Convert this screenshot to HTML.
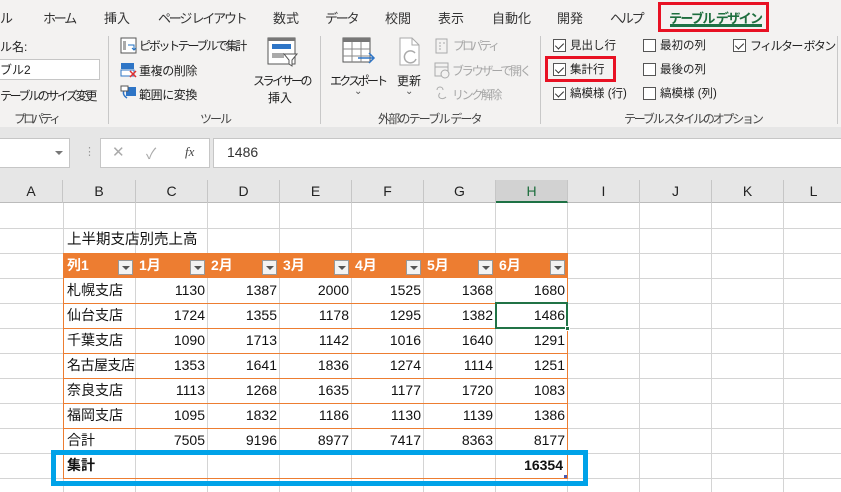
<!DOCTYPE html>
<html><head><meta charset="utf-8"><style>
*{margin:0;padding:0;box-sizing:border-box}
body{width:841px;height:492px;overflow:hidden;background:#fff;font-family:"Liberation Sans","Noto Sans CJK JP",sans-serif;color:#222;position:relative}
.a{position:absolute;white-space:nowrap}
.t{font-size:13px;top:8px;color:#333}
.k{letter-spacing:-2.2px}
.r{font-size:12px;color:#222}
.g{color:#a6a6a6}
.lbl{font-size:12px;top:110px;color:#444}
.sep{position:absolute;top:36px;width:1px;height:88px;background:#c8c8c8}
.cb{position:absolute;width:13px;height:13px;border:1px solid #555;background:#fff}
.cb.on::after{content:"";position:absolute;left:3px;top:1px;width:4px;height:7px;border:solid #333;border-width:0 1.5px 1.5px 0;transform:rotate(45deg)}
.grid{position:absolute;left:0;top:203px;width:841px;height:289px}
.vl{position:absolute;top:0;width:1px;height:289px;background:#d4d4d4}
.hl{position:absolute;left:0;width:841px;height:1px;background:#d4d4d4}
.cell{position:absolute;font-size:14px;height:25px;line-height:25px;color:#111}
.num{text-align:right;width:69px}
.hdr{position:absolute;top:180px;height:23px;line-height:23px;font-size:14px;text-align:center;color:#222;border-right:1px solid #c6c6c6}
.dd{position:absolute;top:260px;width:15px;height:15px;background:#f3f3f3;border:1px solid #999}
.dd::after{content:"";position:absolute;left:3px;top:5px;border:4px solid transparent;border-top:4px solid #555}
</style></head><body>
<div class="a" style="left:0;top:0;width:841px;height:127px;background:#f3f2f1"></div>
<div class="a" style="left:0;top:127px;width:841px;height:11px;background:#e6e6e6"></div>
<div class="a t" style="left:0">ル</div>
<div class="a t k" style="left:43px">ホーム</div>
<div class="a t" style="left:104px">挿入</div>
<div class="a t k" style="left:158px">ページ レイアウト</div>
<div class="a t" style="left:273px">数式</div>
<div class="a t k" style="left:325px">データ</div>
<div class="a t" style="left:385px">校閲</div>
<div class="a t" style="left:438px">表示</div>
<div class="a t" style="left:492px">自動化</div>
<div class="a t" style="left:557px">開発</div>
<div class="a t k" style="left:610px">ヘルプ</div>
<div class="a t" style="left:669px;color:#1e6e3e;font-weight:bold;letter-spacing:-1.6px">テーブル デザイン</div>
<div class="a" style="left:670px;top:24px;width:92px;height:3px;background:#1e7145"></div>
<div class="a" style="left:658px;top:2px;width:111px;height:30px;border:3px solid #e81123"></div>

<div class="a r" style="left:0;top:38px">ル名:</div>
<div class="a" style="left:-2px;top:59px;width:102px;height:21px;background:#fff;border:1px solid #c6c6c6"></div>
<div class="a r" style="left:0;top:61px">ブル2</div>
<div class="a r" style="left:0;top:87px;letter-spacing:-2.4px">テーブルのサイズ変更</div>
<div class="a lbl" style="left:14px;letter-spacing:-3px">プロパティ</div>
<div class="sep" style="left:108px"></div>

<svg class="a" style="left:120px;top:37px" width="18" height="70" viewBox="0 0 18 70">
<rect x="1" y="1" width="15" height="15" fill="#fff" stroke="#555"/><rect x="3" y="4" width="3" height="9" fill="#aaa"/><path d="M8 8h6v5M12 11l2 2 2-2" stroke="#1f6fc0" fill="none"/>
<rect x="1" y="26" width="13" height="6" fill="#2e75c6"/><rect x="1" y="33" width="13" height="6" fill="#fff" stroke="#2e75c6"/><path d="M10 34l6 6M16 34l-6 6" stroke="#e03030" stroke-width="1.5"/>
<rect x="6" y="50" width="10" height="9" fill="#2e75c6"/><path d="M5 52q-4 5 2 9" stroke="#2e75c6" fill="none" stroke-width="1.5"/><rect x="1" y="49" width="7" height="5" fill="#fff" stroke="#555"/>
</svg>
<div class="a r" style="left:139px;top:37px;letter-spacing:-2.3px">ピボットテーブルで集計</div>
<div class="a r" style="left:139px;top:62px;letter-spacing:-0.4px">重複の削除</div>
<div class="a r" style="left:139px;top:86px;letter-spacing:-0.4px">範囲に変換</div>
<svg class="a" style="left:267px;top:37px" width="32" height="30" viewBox="0 0 32 30">
<rect x="1" y="1" width="27" height="26" fill="#fff" stroke="#555"/><rect x="1" y="1" width="27" height="3" fill="#777"/><rect x="5" y="7" width="19" height="5" fill="#2e75c6"/><rect x="5" y="16" width="12" height="5" fill="#aaa"/><path d="M17 17h13l-5 6v6l-3-2v-4z" fill="#fff" stroke="#555"/>
</svg>
<div class="a r" style="left:253px;top:72px;letter-spacing:-2.5px">スライサーの</div>
<div class="a r" style="left:268px;top:89px">挿入</div>
<div class="a lbl" style="left:200px;letter-spacing:-2px">ツール</div>
<div class="sep" style="left:320px"></div>

<svg class="a" style="left:342px;top:37px" width="34" height="30" viewBox="0 0 34 30">
<rect x="1" y="1" width="27" height="24" fill="#fff" stroke="#555"/><rect x="1" y="1" width="27" height="4" fill="#777"/><path d="M10 5v20M19 5v20M1 12h27M1 19h27" stroke="#888"/><path d="M16 21h16M27 16l5 5-5 5" stroke="#2e75c6" fill="none" stroke-width="1.5"/>
</svg>
<div class="a r" style="left:330px;top:72px;letter-spacing:-2.7px">エクスポート</div>
<div class="a r" style="left:354px;top:86px;font-size:10px;color:#555">⌄</div>
<svg class="a" style="left:397px;top:37px" width="26" height="30" viewBox="0 0 26 30">
<path d="M3 1h12l7 7v20H3z" fill="#fff" stroke="#aaa"/><path d="M15 1v7h7" fill="none" stroke="#aaa"/><path d="M18 16a6 6 0 1 0 1 6" fill="none" stroke="#aaa" stroke-width="1.5"/>
</svg>
<div class="a r" style="left:397px;top:72px">更新</div>
<div class="a r" style="left:405px;top:86px;font-size:10px;color:#555">⌄</div>
<svg class="a g" style="left:434px;top:38px" width="16" height="68" viewBox="0 0 16 68">
<rect x="2" y="1" width="11" height="14" fill="none" stroke="#aaa"/><path d="M5 5h2M5 8h2M5 11h2M9 5h2" stroke="#aaa"/>
<rect x="1" y="25" width="13" height="13" fill="none" stroke="#aaa"/><path d="M1 29h13" stroke="#aaa"/><circle cx="11" cy="36" r="4" fill="#f3f2f1" stroke="#aaa"/>
<path d="M3 52c0-4 6-4 6 0M6 55c-4 4 2 8 6 4" fill="none" stroke="#aaa"/>
</svg>
<div class="a r g" style="left:453px;top:37px;letter-spacing:-3px">プロパティ</div>
<div class="a r g" style="left:452px;top:62px;letter-spacing:-2.2px">ブラウザーで開く</div>
<div class="a r g" style="left:452px;top:86px;letter-spacing:-2.4px">リンク解除</div>
<div class="a lbl" style="left:378px;letter-spacing:-1.8px">外部のテーブル データ</div>
<div class="sep" style="left:540px"></div>

<div class="cb on" style="left:553px;top:39px"></div><div class="a r" style="left:570px;top:37px;font-size:11.5px">見出し行</div>
<div class="cb on" style="left:553px;top:63px"></div><div class="a r" style="left:570px;top:61px;font-size:11.5px">集計行</div>
<div class="a" style="left:545px;top:56px;width:71px;height:26px;border:3px solid #e81123"></div>
<div class="cb on" style="left:553px;top:87px"></div><div class="a r" style="left:570px;top:85px;font-size:11.5px">縞模様 (行)</div>
<div class="cb" style="left:643px;top:39px"></div><div class="a r" style="left:660px;top:37px;font-size:11.5px">最初の列</div>
<div class="cb" style="left:643px;top:63px"></div><div class="a r" style="left:660px;top:61px;font-size:11.5px">最後の列</div>
<div class="cb" style="left:643px;top:87px"></div><div class="a r" style="left:660px;top:85px;font-size:11.5px">縞模様 (列)</div>
<div class="cb on" style="left:733px;top:39px"></div><div class="a r" style="left:750px;top:37px;letter-spacing:-1.6px">フィルター ボタン</div>
<div class="a lbl" style="left:624px;letter-spacing:-2.2px">テーブル スタイルのオプション</div>
<div class="sep" style="left:837px"></div>

<div class="a" style="left:0;top:138px;width:841px;height:42px;background:#e6e6e6"></div>
<div class="a" style="left:-2px;top:138px;width:72px;height:30px;background:#fff;border:1px solid #c6c6c6"></div>
<div class="a" style="left:55px;top:151px;border:4px solid transparent;border-top:4px solid #777"></div>
<div class="a" style="left:84px;top:145px;font-size:11px;color:#999">⋮</div>
<div class="a" style="left:100px;top:138px;width:110px;height:30px;background:#fff;border:1px solid #c6c6c6"></div>
<div class="a" style="left:112px;top:143px;font-size:15px;color:#aaa">✕</div>
<div class="a" style="left:146px;top:143px;font-size:15px;color:#aaa">✓</div>
<div class="a" style="left:185px;top:144px;font-size:13px;font-style:italic;font-family:'Liberation Serif',serif;color:#444">fx</div>
<div class="a" style="left:213px;top:138px;width:640px;height:30px;background:#fff;border:1px solid #c6c6c6"></div>
<div class="a" style="left:227px;top:144px;font-size:14px;color:#333">1486</div>

<div class="a" style="left:0;top:180px;width:841px;height:23px;background:#e6e6e6;border-bottom:1px solid #bbb"></div>
<div class="hdr" style="left:0;width:63px">A</div>
<div class="hdr" style="left:63px;width:73px">B</div>
<div class="hdr" style="left:136px;width:72px">C</div>
<div class="hdr" style="left:208px;width:72px">D</div>
<div class="hdr" style="left:280px;width:72px">E</div>
<div class="hdr" style="left:352px;width:72px">F</div>
<div class="hdr" style="left:424px;width:72px">G</div>
<div class="hdr" style="left:496px;width:72px;background:#d2d2d2;color:#1e6e3e;border-bottom:2px solid #1e7145">H</div>
<div class="hdr" style="left:568px;width:72px">I</div>
<div class="hdr" style="left:640px;width:72px">J</div>
<div class="hdr" style="left:712px;width:72px">K</div>
<div class="hdr" style="left:784px;width:60px">L</div>

<div class="grid">
<div class="vl" style="left:63px"></div><div class="vl" style="left:135px"></div><div class="vl" style="left:207px"></div><div class="vl" style="left:279px"></div><div class="vl" style="left:351px"></div><div class="vl" style="left:423px"></div><div class="vl" style="left:495px"></div><div class="vl" style="left:567px"></div><div class="vl" style="left:639px"></div><div class="vl" style="left:711px"></div><div class="vl" style="left:783px"></div>
<div class="hl" style="top:25px"></div><div class="hl" style="top:50px"></div><div class="hl" style="top:75px"></div><div class="hl" style="top:100px"></div><div class="hl" style="top:125px"></div><div class="hl" style="top:150px"></div><div class="hl" style="top:175px"></div><div class="hl" style="top:200px"></div><div class="hl" style="top:225px"></div><div class="hl" style="top:250px"></div><div class="hl" style="top:275px"></div>
</div>
<div class="a" style="left:63px;top:253px;width:505px;height:25px;background:#ed7d31"></div>
<div class="a" style="left:63px;top:278px;width:505px;height:175px;background:#fff;border-left:1px solid #ed7d31;border-right:1px solid #ed7d31"></div>
<div class="a" style="left:63px;top:453px;width:505px;height:26px;border:1px solid #ed7d31"></div>
<div class="a" style="left:135px;top:278px;width:1px;height:175px;background:#d4d4d4"></div>
<div class="a" style="left:207px;top:278px;width:1px;height:175px;background:#d4d4d4"></div>
<div class="a" style="left:279px;top:278px;width:1px;height:175px;background:#d4d4d4"></div>
<div class="a" style="left:351px;top:278px;width:1px;height:175px;background:#d4d4d4"></div>
<div class="a" style="left:423px;top:278px;width:1px;height:175px;background:#d4d4d4"></div>
<div class="a" style="left:495px;top:278px;width:1px;height:175px;background:#d4d4d4"></div>
<div class="a" style="left:64px;top:303px;width:503px;height:1px;background:#ed7d31"></div>
<div class="a" style="left:64px;top:328px;width:503px;height:1px;background:#ed7d31"></div>
<div class="a" style="left:64px;top:353px;width:503px;height:1px;background:#ed7d31"></div>
<div class="a" style="left:64px;top:378px;width:503px;height:1px;background:#ed7d31"></div>
<div class="a" style="left:64px;top:403px;width:503px;height:1px;background:#ed7d31"></div>
<div class="a" style="left:64px;top:428px;width:503px;height:1px;background:#ed7d31"></div>

<div class="cell" style="left:67px;top:228px;font-size:14.5px">上半期支店別売上高</div>
<div class="cell" style="left:67px;top:253px;color:#fff;font-weight:bold">列1</div>
<div class="cell" style="left:139px;top:253px;color:#fff;font-weight:bold">1月</div>
<div class="cell" style="left:211px;top:253px;color:#fff;font-weight:bold">2月</div>
<div class="cell" style="left:283px;top:253px;color:#fff;font-weight:bold">3月</div>
<div class="cell" style="left:355px;top:253px;color:#fff;font-weight:bold">4月</div>
<div class="cell" style="left:427px;top:253px;color:#fff;font-weight:bold">5月</div>
<div class="cell" style="left:499px;top:253px;color:#fff;font-weight:bold">6月</div>
<div class="dd" style="left:118px"></div><div class="dd" style="left:190px"></div><div class="dd" style="left:262px"></div><div class="dd" style="left:334px"></div><div class="dd" style="left:406px"></div><div class="dd" style="left:478px"></div><div class="dd" style="left:550px"></div>

<div class="cell" style="left:67px;top:278px">札幌支店</div><div class="cell num" style="left:136px;top:278px">1130</div><div class="cell num" style="left:208px;top:278px">1387</div><div class="cell num" style="left:280px;top:278px">2000</div><div class="cell num" style="left:352px;top:278px">1525</div><div class="cell num" style="left:424px;top:278px">1368</div><div class="cell num" style="left:496px;top:278px">1680</div>
<div class="cell" style="left:67px;top:303px">仙台支店</div><div class="cell num" style="left:136px;top:303px">1724</div><div class="cell num" style="left:208px;top:303px">1355</div><div class="cell num" style="left:280px;top:303px">1178</div><div class="cell num" style="left:352px;top:303px">1295</div><div class="cell num" style="left:424px;top:303px">1382</div><div class="cell num" style="left:496px;top:303px">1486</div>
<div class="cell" style="left:67px;top:328px">千葉支店</div><div class="cell num" style="left:136px;top:328px">1090</div><div class="cell num" style="left:208px;top:328px">1713</div><div class="cell num" style="left:280px;top:328px">1142</div><div class="cell num" style="left:352px;top:328px">1016</div><div class="cell num" style="left:424px;top:328px">1640</div><div class="cell num" style="left:496px;top:328px">1291</div>
<div class="cell" style="left:67px;top:353px;width:68px;overflow:hidden;letter-spacing:-0.5px">名古屋支店</div><div class="cell num" style="left:136px;top:353px">1353</div><div class="cell num" style="left:208px;top:353px">1641</div><div class="cell num" style="left:280px;top:353px">1836</div><div class="cell num" style="left:352px;top:353px">1274</div><div class="cell num" style="left:424px;top:353px">1114</div><div class="cell num" style="left:496px;top:353px">1251</div>
<div class="cell" style="left:67px;top:378px">奈良支店</div><div class="cell num" style="left:136px;top:378px">1113</div><div class="cell num" style="left:208px;top:378px">1268</div><div class="cell num" style="left:280px;top:378px">1635</div><div class="cell num" style="left:352px;top:378px">1177</div><div class="cell num" style="left:424px;top:378px">1720</div><div class="cell num" style="left:496px;top:378px">1083</div>
<div class="cell" style="left:67px;top:403px">福岡支店</div><div class="cell num" style="left:136px;top:403px">1095</div><div class="cell num" style="left:208px;top:403px">1832</div><div class="cell num" style="left:280px;top:403px">1186</div><div class="cell num" style="left:352px;top:403px">1130</div><div class="cell num" style="left:424px;top:403px">1139</div><div class="cell num" style="left:496px;top:403px">1386</div>
<div class="cell" style="left:67px;top:428px">合計</div><div class="cell num" style="left:136px;top:428px">7505</div><div class="cell num" style="left:208px;top:428px">9196</div><div class="cell num" style="left:280px;top:428px">8977</div><div class="cell num" style="left:352px;top:428px">7417</div><div class="cell num" style="left:424px;top:428px">8363</div><div class="cell num" style="left:496px;top:428px">8177</div>
<div class="cell" style="left:67px;top:453px;font-weight:bold">集計</div>
<div class="cell num" style="left:494px;top:453px;font-weight:bold">16354</div>
<div class="a" style="left:564px;top:475px;width:3px;height:3px;background:#4a5ab0"></div>

<div class="a" style="left:495px;top:302px;width:73px;height:27px;border:2px solid #217346"></div>
<div class="a" style="left:565px;top:326px;width:5px;height:5px;background:#217346;border:1px solid #fff"></div>
<div class="a" style="left:51px;top:450px;width:537px;height:36px;border:5px solid #00a2e8"></div>
</body></html>
